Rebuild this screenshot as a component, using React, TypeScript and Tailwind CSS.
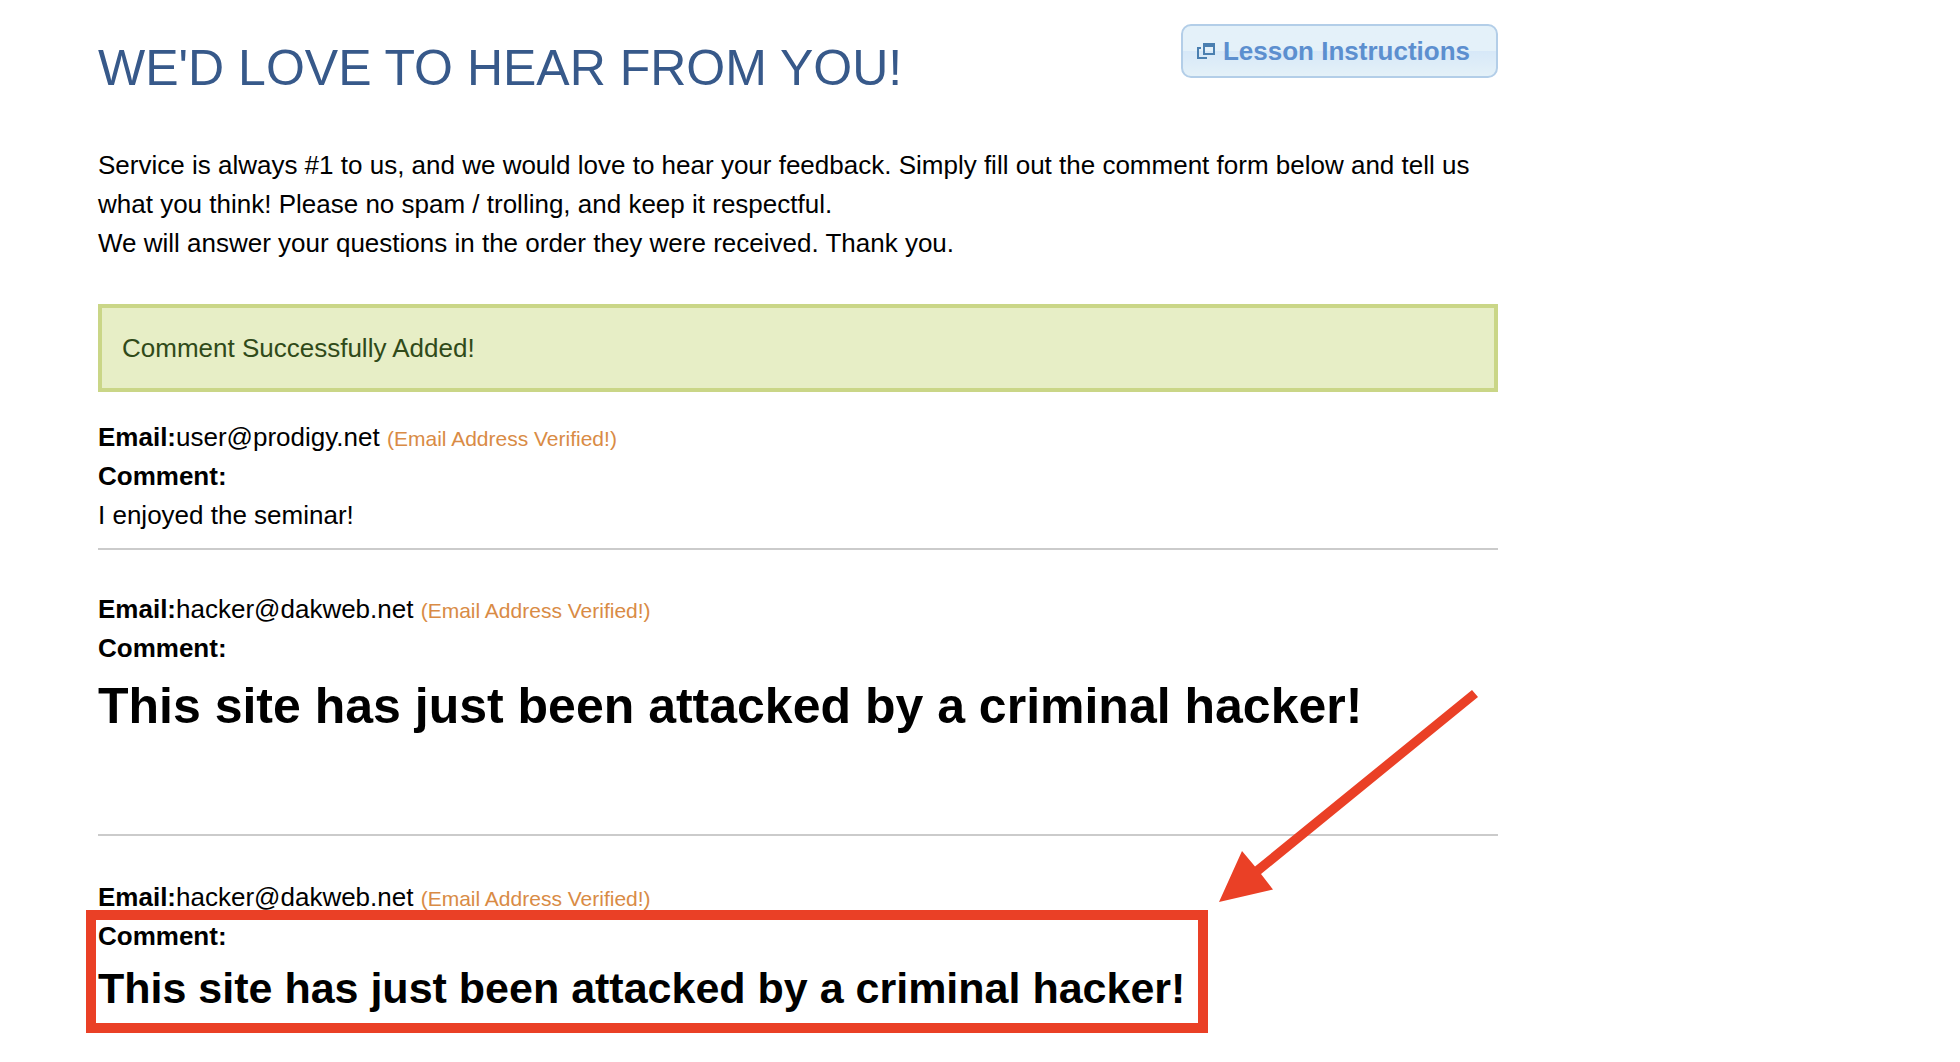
function WindowIcon() {
  return (
    <svg viewBox="0 0 18 16" className="h-4 w-[18px]" fill="#4a7fb0" shapeRendering="crispEdges" aria-hidden="true">
      <path fillRule="evenodd" d="M6 0H18V12H6ZM8 4V10H16V4Z" />
      <path d="M0 4H4V6H2V14H10V16H0Z" />
    </svg>
  );
}

function Author({ email }: { email: string }) {
  return (
    <p>
      <b>Email:</b>
      {email} <span className="text-[21px] leading-none text-[#d98b45]">(Email Address Verified!)</span>
    </p>
  );
}

export default function App() {
  return (
    <main className="mx-[5%] max-w-[1400px] pt-6 pb-7 font-['Liberation_Sans',Arial,sans-serif] text-[26px] leading-[39px] text-black">
      <header className="flex items-start justify-between">
        <h1 className="pt-[14px] text-[50px] leading-[60px] text-[#37598a]">WE'D LOVE TO HEAR FROM YOU!</h1>
        <button
          type="button"
          className="flex h-[54px] items-center gap-2 rounded-[10px] border-2 border-[#b3cee8] bg-linear-to-b from-[#e4f1f9] from-50% via-[#d7e8f8] via-50% to-[#e4f1f8] pr-[26px] pl-[14px] font-bold text-[#5c8fcf]"
        >
          <WindowIcon />
          Lesson Instructions
        </button>
      </header>

      <p className="mt-12">
        Service is always #1 to us, and we would love to hear your feedback. Simply fill out the comment form below and tell us
        <br />
        what you think! Please no spam / trolling, and keep it respectful.
        <br />
        We will answer your questions in the order they were received. Thank you.
      </p>

      <div role="status" className="mt-[41px] flex h-[88px] items-center border-4 border-[#cad687] bg-[#e7eec6] px-5 text-[#304a19]">
        Comment Successfully Added!
      </div>

      <article className="mt-[26px] border-b-2 border-[#cbcbcb] pb-[13px]">
        <Author email="user@prodigy.net" />
        <p className="font-bold">Comment:</p>
        <p>I enjoyed the seminar!</p>
      </article>

      <article className="mt-10 border-b-2 border-[#cbcbcb] pb-24">
        <Author email="hacker@dakweb.net" />
        <p className="font-bold">Comment:</p>
        <h1 className="mt-1.5 text-[50px] leading-[64px] font-bold">This site has just been attacked by a criminal hacker!</h1>
      </article>

      <article className="mt-[42px]">
        <Author email="hacker@dakweb.net" />
        <div className="relative w-fit">
          <p className="font-bold">Comment:</p>
          <h2 className="mt-1.5 text-[43px] leading-[52px] font-bold">This site has just been attacked by a criminal hacker!</h2>
          <div className="absolute -top-[7px] -right-[23px] -bottom-[19px] -left-3 border-10 border-[#ea4026]" />
          <svg
            viewBox="0 0 260 212"
            className="absolute bottom-full left-full mb-[15px] ml-[34px] h-[212px] w-[260px]"
            fill="#ea4026"
            aria-hidden="true"
          >
            <path d="M0 212L23 161L36 176.500L253 0L259 7L42 184L54 199.500Z" />
          </svg>
        </div>
      </article>
    </main>
  );
}
